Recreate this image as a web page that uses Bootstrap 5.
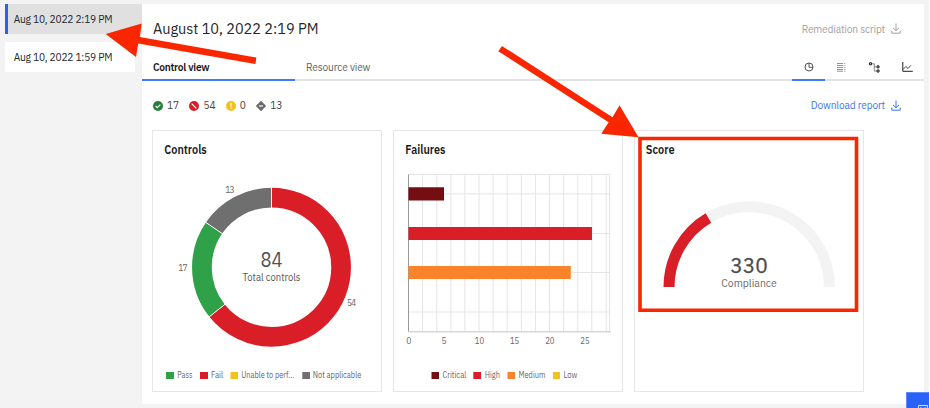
<!DOCTYPE html>
<html lang="en">
<head>
<meta charset="utf-8">
<title>Scan results</title>
<link href="https://cdn.jsdelivr.net/npm/bootstrap@5.3.0/dist/css/bootstrap.min.css" rel="stylesheet">
<style>
body{width:930px;height:408px;overflow:hidden;background:#fff;font-family:"IBM Plex Sans",Roboto,"Liberation Sans",sans-serif;color:#262626;font-size:10.2px;line-height:14px}
.shell{width:929px;height:408px;background:#f3f3f3;padding:4px 5px 0}
.side{width:137px}
.scan{height:30px;padding-left:8.7px;padding-top:2px;letter-spacing:-.2px;width:130px;background:#fff}
.scan.on{width:137px;background:#e0e0e0;border-left:3px solid #2563f5;padding-left:5.7px}
.main{width:782px;height:399.5px;background:#fff}
.head{height:51px;padding:0 23px 1px 11px}
.head h1{font-size:14.5px;font-weight:400;letter-spacing:-.03px}
.act{gap:6px;letter-spacing:-.16px}
.act span{padding-top:1px}
.act svg{margin-bottom:1px}
.dim{color:#a2a2a2}.link{color:#3b74f2}
.tabs{height:26px;box-shadow:inset 0 -2px #e2e2e2}
.tabs>div{padding-left:11px;width:153px;letter-spacing:-.14px;color:#636363}
.tabs>.ico{width:33px;padding:0 0 2px;justify-content:center}
.tabs>.cur{box-shadow:inset 0 -2px #427bf8;color:#181818}
.strong{font-weight:600;letter-spacing:-.24px!important}
.counts{height:49px;padding:0 23px 0 11px}
.tally{gap:4px;margin-right:10.2px;font-size:10.2px;color:#444}
.tiles{gap:11px;padding-left:10px}
.tile{width:230px;height:262px;border:1px solid #e6e6e6;overflow:hidden}
svg{display:block}
.t{font-size:8.5px;fill:#666}
.h{font-size:12px;font-weight:600;fill:#181818}
.over{left:0;top:0;pointer-events:none}
.chat{left:906px;top:392px;width:23px;height:16px;background:#2962fb;border:1px solid #5f8bff;border-width:1px 0 0 1px}
</style>
<script src="https://cdn.jsdelivr.net/npm/bootstrap@5.3.0/dist/js/bootstrap.bundle.min.js"></script>
</head>
<body class="position-relative">
<div class="shell d-flex">
  <aside class="side d-flex flex-column gap-2">
    <div class="scan on d-flex align-items-center">Aug 10, 2022 2:19 PM</div>
    <div class="scan d-flex align-items-center">Aug 10, 2022 1:59 PM</div>
  </aside>
  <main class="main">
    <header class="head d-flex align-items-center justify-content-between">
      <h1 class="m-0">August 10, 2022 2:19 PM</h1>
      <div class="act dim d-flex align-items-center"><span>Remediation script</span>
        <svg width="10" height="11" fill="none" stroke="currentColor"><path d="M5 .5V7.7M2 4.8 5 7.7 8 4.8M.8 7.5v2.7h8.4V7.5"/></svg></div>
    </header>
    <nav class="tabs d-flex">
      <div class="cur strong d-flex align-items-center">Control view</div>
      <div class="d-flex align-items-center">Resource view</div>
      <div class="ico cur d-flex align-items-center ms-auto"><svg width="10" height="10" fill="none" stroke="#444" stroke-width=".9"><circle cx="5" cy="5" r="4"/><path d="M5 1v4.3h4"/></svg></div>
      <div class="ico d-flex align-items-center"><svg width="9" height="10" fill="none" stroke="#777" stroke-width=".8"><path d="M0 1.5h6M0 3.5h6M0 5.5h6M0 7.5h6M0 9.2h6M7.3 1.5h1M7.3 3.5h1M7.3 5.5h1M7.3 7.5h1M7.3 9.2h1"/></svg></div>
      <div class="ico d-flex align-items-center"><svg width="11" height="11" fill="none" stroke="#161616"><path d="M.5.8h2v2h-2zM8 3.8h2v2H8zM8 8h2v2H8z"/><path d="M2.8 1.8h2.5v7.2h2.4M5.3 4.8h2.4" stroke="#666" stroke-width=".8"/></svg></div>
      <div class="ico d-flex align-items-center"><svg width="11" height="10" fill="none" stroke="#222"><path d="M.8 0v9.3h10"/><path d="M1.2 7.3 3.8 4.5 6 6.5 9 3.3" stroke-width=".8"/></svg></div>
    </nav>
    <div class="counts d-flex align-items-center">
      <div class="tally d-flex align-items-center"><svg width="10" height="10"><circle cx="5" cy="5" r="5" fill="#24803c"/><path d="m2.6 5 1.7 1.7 3.1-3.1" fill="none" stroke="#fff" stroke-width="1.1"/></svg><span>17</span></div>
      <div class="tally d-flex align-items-center"><svg width="10" height="10"><circle cx="5" cy="5" r="5" fill="#da1e28"/><path d="m2.7 2.7 4.6 4.6" stroke="#fff" stroke-width="1.2"/></svg><span>54</span></div>
      <div class="tally d-flex align-items-center"><svg width="10" height="10"><circle cx="5" cy="5" r="5" fill="#f1c21b"/><path d="M5 2v3.8M5 6.8v1.1" stroke="#fff" stroke-width="1.1"/></svg><span>0</span></div>
      <div class="tally d-flex align-items-center"><svg width="10" height="10"><path d="M5 .1 9.9 5 5 9.9.1 5z" fill="#6a6a6a" stroke="#6a6a6a" stroke-width=".5"/><path d="M3 5h4" stroke="#fff" stroke-width="1.2"/></svg><span>13</span></div>
      <div class="act link d-flex align-items-center ms-auto"><span>Download report</span>
        <svg width="10" height="11" fill="none" stroke="currentColor"><path d="M5 .5V7.7M2 4.8 5 7.7 8 4.8M.8 7.5v2.7h8.4V7.5"/></svg></div>
    </div>
    <section class="tiles d-flex">
      <div class="tile">
        <svg width="228" height="260" viewBox="153 131 228 260">
          <text class="h" x="164.3" y="154" textLength="42.5" lengthAdjust="spacingAndGlyphs">Controls</text>
          <g fill="none" stroke-width="19.7" transform="rotate(-90 271.5 267.2)">
            <circle cx="271.5" cy="267.2" r="69.6" stroke="#da1e28" pathLength="84" stroke-dasharray="54 30"/>
            <circle cx="271.5" cy="267.2" r="69.6" stroke="#2fa148" pathLength="84" stroke-dasharray="17 67" stroke-dashoffset="-54"/>
            <circle cx="271.5" cy="267.2" r="69.6" stroke="#6f6f6f" pathLength="84" stroke-dasharray="13 71" stroke-dashoffset="-71"/>
          </g>
          <g stroke="#fff" stroke-width=".9"><path d="M271.5 187v21"/><path d="M271.5 187v21" transform="rotate(231.43 271.5 267.2)"/><path d="M271.5 187v21" transform="rotate(304.29 271.5 267.2)"/></g>
          <g class="t"><text x="225.3" y="193" textLength="9.3">13</text><text x="178.3" y="271.3" textLength="9.3">17</text><text x="347" y="306.3" textLength="9.2">54</text></g>
          <text x="260.5" y="266.8" font-size="20" fill="#525252" textLength="22" lengthAdjust="spacingAndGlyphs">84</text>
          <text x="242.5" y="281" font-size="10.2" fill="#555" textLength="58" lengthAdjust="spacingAndGlyphs">Total controls</text>
          <path d="M166 372h8v7h-8z" fill="#2fa148"/><path d="M200 372h8v7h-8z" fill="#da1e28"/><path d="M230.5 372h7.5v7h-7.5z" fill="#f1c21b"/><path d="M302.3 372h7.7v7h-7.7z" fill="#6f6f6f"/>
          <g class="t"><text x="177.3" y="378.3" textLength="15.2" lengthAdjust="spacingAndGlyphs">Pass</text><text x="211" y="378.3" textLength="12" lengthAdjust="spacingAndGlyphs">Fail</text><text x="241.3" y="378.3" textLength="53" lengthAdjust="spacingAndGlyphs">Unable to perf...</text><text x="312.8" y="378.3" textLength="48.5" lengthAdjust="spacingAndGlyphs">Not applicable</text></g>
        </svg>
      </div>
      <div class="tile">
        <svg width="228" height="260" viewBox="394 131 228 260">
          <text class="h" x="405.3" y="154" textLength="40.2" lengthAdjust="spacingAndGlyphs">Failures</text>
          <path d="M422.6 174.5v157M436.7 174.5v157M450.8 174.5v157M464.9 174.5v157M479 174.5v157M493.1 174.5v157M507.2 174.5v157M521.3 174.5v157M535.4 174.5v157M549.5 174.5v157M563.6 174.5v157M577.7 174.5v157M591.8 174.5v157M606.3 174.5v157M609.6 174.5v157M408.5 174.5h201.5M408.5 193.9h201.5M408.5 233.5h201.5M408.5 272.5h201.5M408.5 312h201.5" stroke="#e5e5e5" fill="none"/>
          <path d="M408.5 174.5v157.3" stroke="#999" fill="none"/><path d="M408 331.8h203" stroke="#c4c4c4" fill="none"/>
          <path d="M408.5 187.3H444v13.2h-35.5z" fill="#750e13"/><path d="M408.5 227H592v13H408.5z" fill="#da1e28"/><path d="M408.5 266h162.3v13H408.5z" fill="#fa832c"/>
          <g class="t" text-anchor="middle"><text x="408.7" y="343.7">0</text><text x="444" y="343.7">5</text><text x="479.4" y="343.7" textLength="9.3" lengthAdjust="spacingAndGlyphs">10</text><text x="514.6" y="343.7" textLength="9.3" lengthAdjust="spacingAndGlyphs">15</text><text x="549.8" y="343.7" textLength="9.3" lengthAdjust="spacingAndGlyphs">20</text><text x="585" y="343.7" textLength="9.3" lengthAdjust="spacingAndGlyphs">25</text></g>
          <path d="M431.5 372h7.5v7h-7.5z" fill="#750e13"/><path d="M473.3 372h7.7v7h-7.7z" fill="#da1e28"/><path d="M507.5 372h7.5v7h-7.5z" fill="#fa832c"/><path d="M553 372h7v7h-7z" fill="#f1c21b"/>
          <g class="t"><text x="442.5" y="378.3" textLength="23.7" lengthAdjust="spacingAndGlyphs">Critical</text><text x="484.7" y="378.3" textLength="15.2" lengthAdjust="spacingAndGlyphs">High</text><text x="518.5" y="378.3" textLength="27" lengthAdjust="spacingAndGlyphs">Medium</text><text x="563.5" y="378.3" textLength="13.8" lengthAdjust="spacingAndGlyphs">Low</text></g>
        </svg>
      </div>
      <div class="tile">
        <svg width="228" height="260" viewBox="635 131 228 260">
          <text class="h" x="645.8" y="154" textLength="28.7" lengthAdjust="spacingAndGlyphs">Score</text>
          <g fill="none" stroke-width="11"><path d="M669 287a80.2 80.2 0 0 1 160.4 0" stroke="#f3f3f3"/><path d="M669 287a80.2 80.2 0 0 1 160.4 0" stroke="#da1e28" pathLength="100" stroke-dasharray="33 100"/></g>
          <text x="730.3" y="273" font-size="19.8" fill="#4c4c4c" stroke="#4c4c4c" stroke-width=".3" textLength="37.5" lengthAdjust="spacingAndGlyphs">330</text>
          <text x="721.3" y="287.2" font-size="10.2" fill="#6a6a6a" textLength="55.5" lengthAdjust="spacingAndGlyphs">Compliance</text>
        </svg>
      </div>
    </section>
  </main>
</div>
<div class="chat position-absolute"><svg width="22" height="15" fill="none" stroke="#d4e0ff"><path d="M11.5 16v-3.5h9V16M14 16v-2M18 16v-2"/></svg></div>
<svg class="over position-absolute" width="930" height="408">
  <g fill="#fa2600"><path d="M105.7 33.9 141.7 23.5 139.8 37 256.4 57.5 255.4 64 138.2 43.5 136 57z"/><path d="M502 46 612.5 117.3 619.5 105.3 638.5 137.3 601.3 133.7 608.6 122.3 498.3 51.2z"/></g>
  <path d="M640 138.5h216.5v171.7H640z" fill="none" stroke="#fa2600" stroke-width="3.6"/>
</svg>
</body>
</html>
